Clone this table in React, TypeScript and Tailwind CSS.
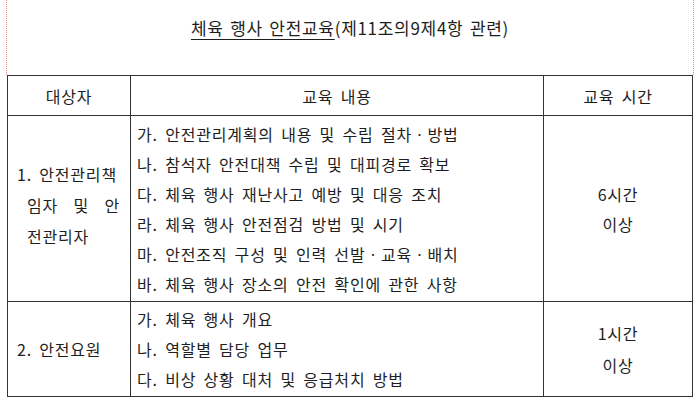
const font = '"Noto Sans CJK KR", "Noto Sans", sans-serif'

const row1Items = [
    '가. 안전관리계획의 내용 및 수립 절차ㆍ방법',
    '나. 참석자 안전대책 수립 및 대피경로 확보',
    '다. 체육 행사 재난사고 예방 및 대응 조치',
    '라. 체육 행사 안전점검 방법 및 시기',
    '마. 안전조직 구성 및 인력 선발ㆍ교육ㆍ배치',
    '바. 체육 행사 장소의 안전 확인에 관한 사항',
]

const row2Items = [
    '가. 체육 행사 개요',
    '나. 역할별 담당 업무',
    '다. 비상 상황 대처 및 응급처치 방법',
]

export default function App() {
    return (
        <div
            className="w-[700px] h-[403px] bg-white text-[#1e1e1e] overflow-hidden tracking-[0.8px] [word-spacing:3px]"
            style={{ fontFamily: font }}
        >
            {/* Title area with dotted page edges */}
            <div className="mx-[6px] h-[75px] border-x border-dotted border-[#f08a8a] pt-[15px] text-center text-[17px] leading-[26px] tracking-[0.7px] [word-spacing:2px]">
                <span className="underline underline-offset-[4px] decoration-1">체육 행사 안전교육</span>
                <span>(제11조의9제4항 관련)</span>
            </div>

            {/* Table */}
            <table className="ml-[7px] w-[686px] border-collapse table-fixed text-[16px]">
                <colgroup>
                    <col className="w-[123px]" />
                    <col className="w-[413px]" />
                    <col />
                </colgroup>
                <tbody>
                    <tr className="h-[40px]">
                        <td className="border border-[#333] text-center align-middle">대상자</td>
                        <td className="border border-[#333] text-center align-middle">교육 내용</td>
                        <td className="border border-[#333] text-center align-middle">교육 시간</td>
                    </tr>
                    <tr className="h-[186px]">
                        <td className="border border-[#333] align-middle pl-[9px] pr-[10px] pb-[6px] leading-[31px]">
                            <div className="whitespace-nowrap">1. 안전관리책</div>
                            <div className="pl-[10px] flex justify-between">
                                <span>임자</span>
                                <span>및</span>
                                <span>안</span>
                            </div>
                            <div className="pl-[10px]">전관리자</div>
                        </td>
                        <td className="border border-[#333] align-middle pl-[6px] leading-[30px]">
                            {row1Items.map(t => (
                                <div key={t} className="whitespace-nowrap">{t}</div>
                            ))}
                        </td>
                        <td className="border border-[#333] align-middle text-center leading-[30px]">
                            <div>6시간</div>
                            <div>이상</div>
                        </td>
                    </tr>
                    <tr className="h-[95px]">
                        <td className="border border-[#333] align-middle pl-[9px]">2. 안전요원</td>
                        <td className="border border-[#333] align-middle pl-[6px] leading-[30px]">
                            {row2Items.map(t => (
                                <div key={t} className="whitespace-nowrap">{t}</div>
                            ))}
                        </td>
                        <td className="border border-[#333] align-middle text-center leading-[32px]">
                            <div>1시간</div>
                            <div>이상</div>
                        </td>
                    </tr>
                </tbody>
            </table>
        </div>
    )
}
